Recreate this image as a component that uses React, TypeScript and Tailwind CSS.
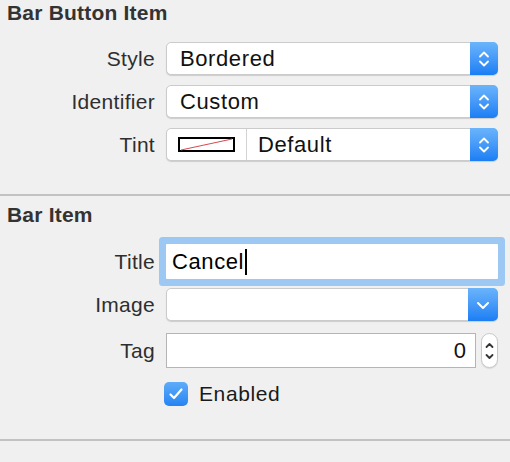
import type { ReactNode } from "react"

const font = { fontFamily: '"Liberation Sans", Arial, sans-serif' }

function UpDown() {
  return (
    <svg width="12" height="20" viewBox="0 0 12 20" fill="none" stroke="white" strokeWidth="1.8" strokeLinecap="round" strokeLinejoin="round">
      <path d="M2 7.5 L6 3.5 L10 7.5" />
      <path d="M2 12.5 L6 16.5 L10 12.5" />
    </svg>
  )
}

function Down() {
  return (
    <svg width="14" height="10" viewBox="0 0 14 10" fill="none" stroke="white" strokeWidth="2" strokeLinecap="round" strokeLinejoin="round">
      <path d="M2 3 L7 8 L12 3" />
    </svg>
  )
}

function PopUp({ children, pulldown = false }: { children: ReactNode; pulldown?: boolean }) {
  return (
    <div className="flex h-[33px] rounded-[5px] bg-white border border-[#cbcbcb] shadow-[0_1px_1px_rgba(0,0,0,0.15)]">
      <div className="flex-1 flex items-center min-w-0">{children}</div>
      <div
        className={`${pulldown ? "w-[30px]" : "w-[28px]"} -my-px -mr-px rounded-r-[5px] bg-gradient-to-b from-[#6ab4fb] to-[#1a7ef4] flex items-center justify-center`}
      >
        {pulldown ? <Down /> : <UpDown />}
      </div>
    </div>
  )
}

function Label({ children }: { children: ReactNode }) {
  return <div className="text-right text-[21px] tracking-[0.3px] text-[#2e2e2e]">{children}</div>
}

export default function App() {
  return (
    <main className="w-[510px] h-[462px] bg-[#f0f0f0] overflow-hidden" style={font}>
      <h2 className="pt-[1px] pl-[7px] text-[21px] leading-[24px] tracking-[0.2px] font-bold text-[#333]">Bar Button Item</h2>

      <div className="mt-[17px] mr-[12px] grid grid-cols-[155px_1fr] gap-x-[11px] gap-y-[10px] items-center">
        <Label>Style</Label>
        <PopUp>
          <span className="pl-[13px] text-[22px] tracking-[0.6px] text-[#111]">Bordered</span>
        </PopUp>

        <Label>Identifier</Label>
        <PopUp>
          <span className="pl-[13px] text-[22px] tracking-[0.6px] text-[#111]">Custom</span>
        </PopUp>

        <Label>Tint</Label>
        <PopUp>
          <div className="w-[80px] h-full flex items-center justify-center border-r border-[#d2d2d2]">
            <svg width="57" height="15" viewBox="0 0 57 15">
              <rect x="1" y="1" width="55" height="13" fill="white" stroke="black" strokeWidth="2" />
              <line x1="3" y1="13" x2="54" y2="2" stroke="#d9484f" strokeWidth="1" />
            </svg>
          </div>
          <span className="pl-[11px] text-[22px] tracking-[0.6px] text-[#111]">Default</span>
        </PopUp>
      </div>

      <div className="mt-[33px] h-[2px] bg-[#c2c2c2]" />

      <h2 className="pt-[7px] pl-[7px] text-[21px] leading-[24px] tracking-[0.2px] font-bold text-[#333]">Bar Item</h2>

      <div className="mt-[17px] mr-[12px] grid grid-cols-[155px_1fr] gap-x-[11px] items-center">
        <Label>Title</Label>
        <div className="h-[35px] bg-white rounded-[1px] shadow-[0_0_0_7px_#9cc8f3] flex items-center pl-[6px]">
          <span className="text-[22px] tracking-[0.6px] text-black">Cancel</span>
          <span className="ml-[1px] w-[2px] h-[26px] bg-black" />
        </div>

        <div className="mt-[9px]">
          <Label>Image</Label>
        </div>
        <div className="mt-[9px]">
          <PopUp pulldown>
            <span />
          </PopUp>
        </div>

        <div className="mt-[12px]">
          <Label>Tag</Label>
        </div>
        <div className="mt-[12px] flex items-center gap-[5px]">
          <div className="flex-1 h-[35px] bg-white border border-[#b5b5b5] flex items-center justify-end pr-[9px]">
            <span className="text-[22px] text-[#111]">0</span>
          </div>
          <div className="w-[17px] h-[35px] rounded-full bg-white border border-[#c8c8c8] shadow-[0_1px_1px_rgba(0,0,0,0.1)] flex items-center justify-center">
            <svg width="9" height="22" viewBox="0 0 9 22" fill="none" stroke="#333" strokeWidth="1.8" strokeLinecap="round" strokeLinejoin="round">
              <path d="M1.5 7 L4.5 4 L7.5 7" />
              <path d="M1.5 15 L4.5 18 L7.5 15" />
            </svg>
          </div>
        </div>

        <div />
        <div className="mt-[10px] flex items-center -ml-[2px]">
          <div className="w-[24px] h-[24px] rounded-[5px] bg-gradient-to-b from-[#5eacf8] to-[#2384f3] flex items-center justify-center">
            <svg width="16" height="14" viewBox="0 0 16 14" fill="none" stroke="white" strokeWidth="2.2" strokeLinecap="round" strokeLinejoin="round">
              <path d="M2.5 7.5 L6 11 L13.5 2.5" />
            </svg>
          </div>
          <span className="ml-[11px] text-[21px] tracking-[0.6px] text-[#1a1a1a]">Enabled</span>
        </div>
      </div>

      <div className="mt-[29px] h-[2px] bg-[#c2c2c2]" />
    </main>
  )
}
